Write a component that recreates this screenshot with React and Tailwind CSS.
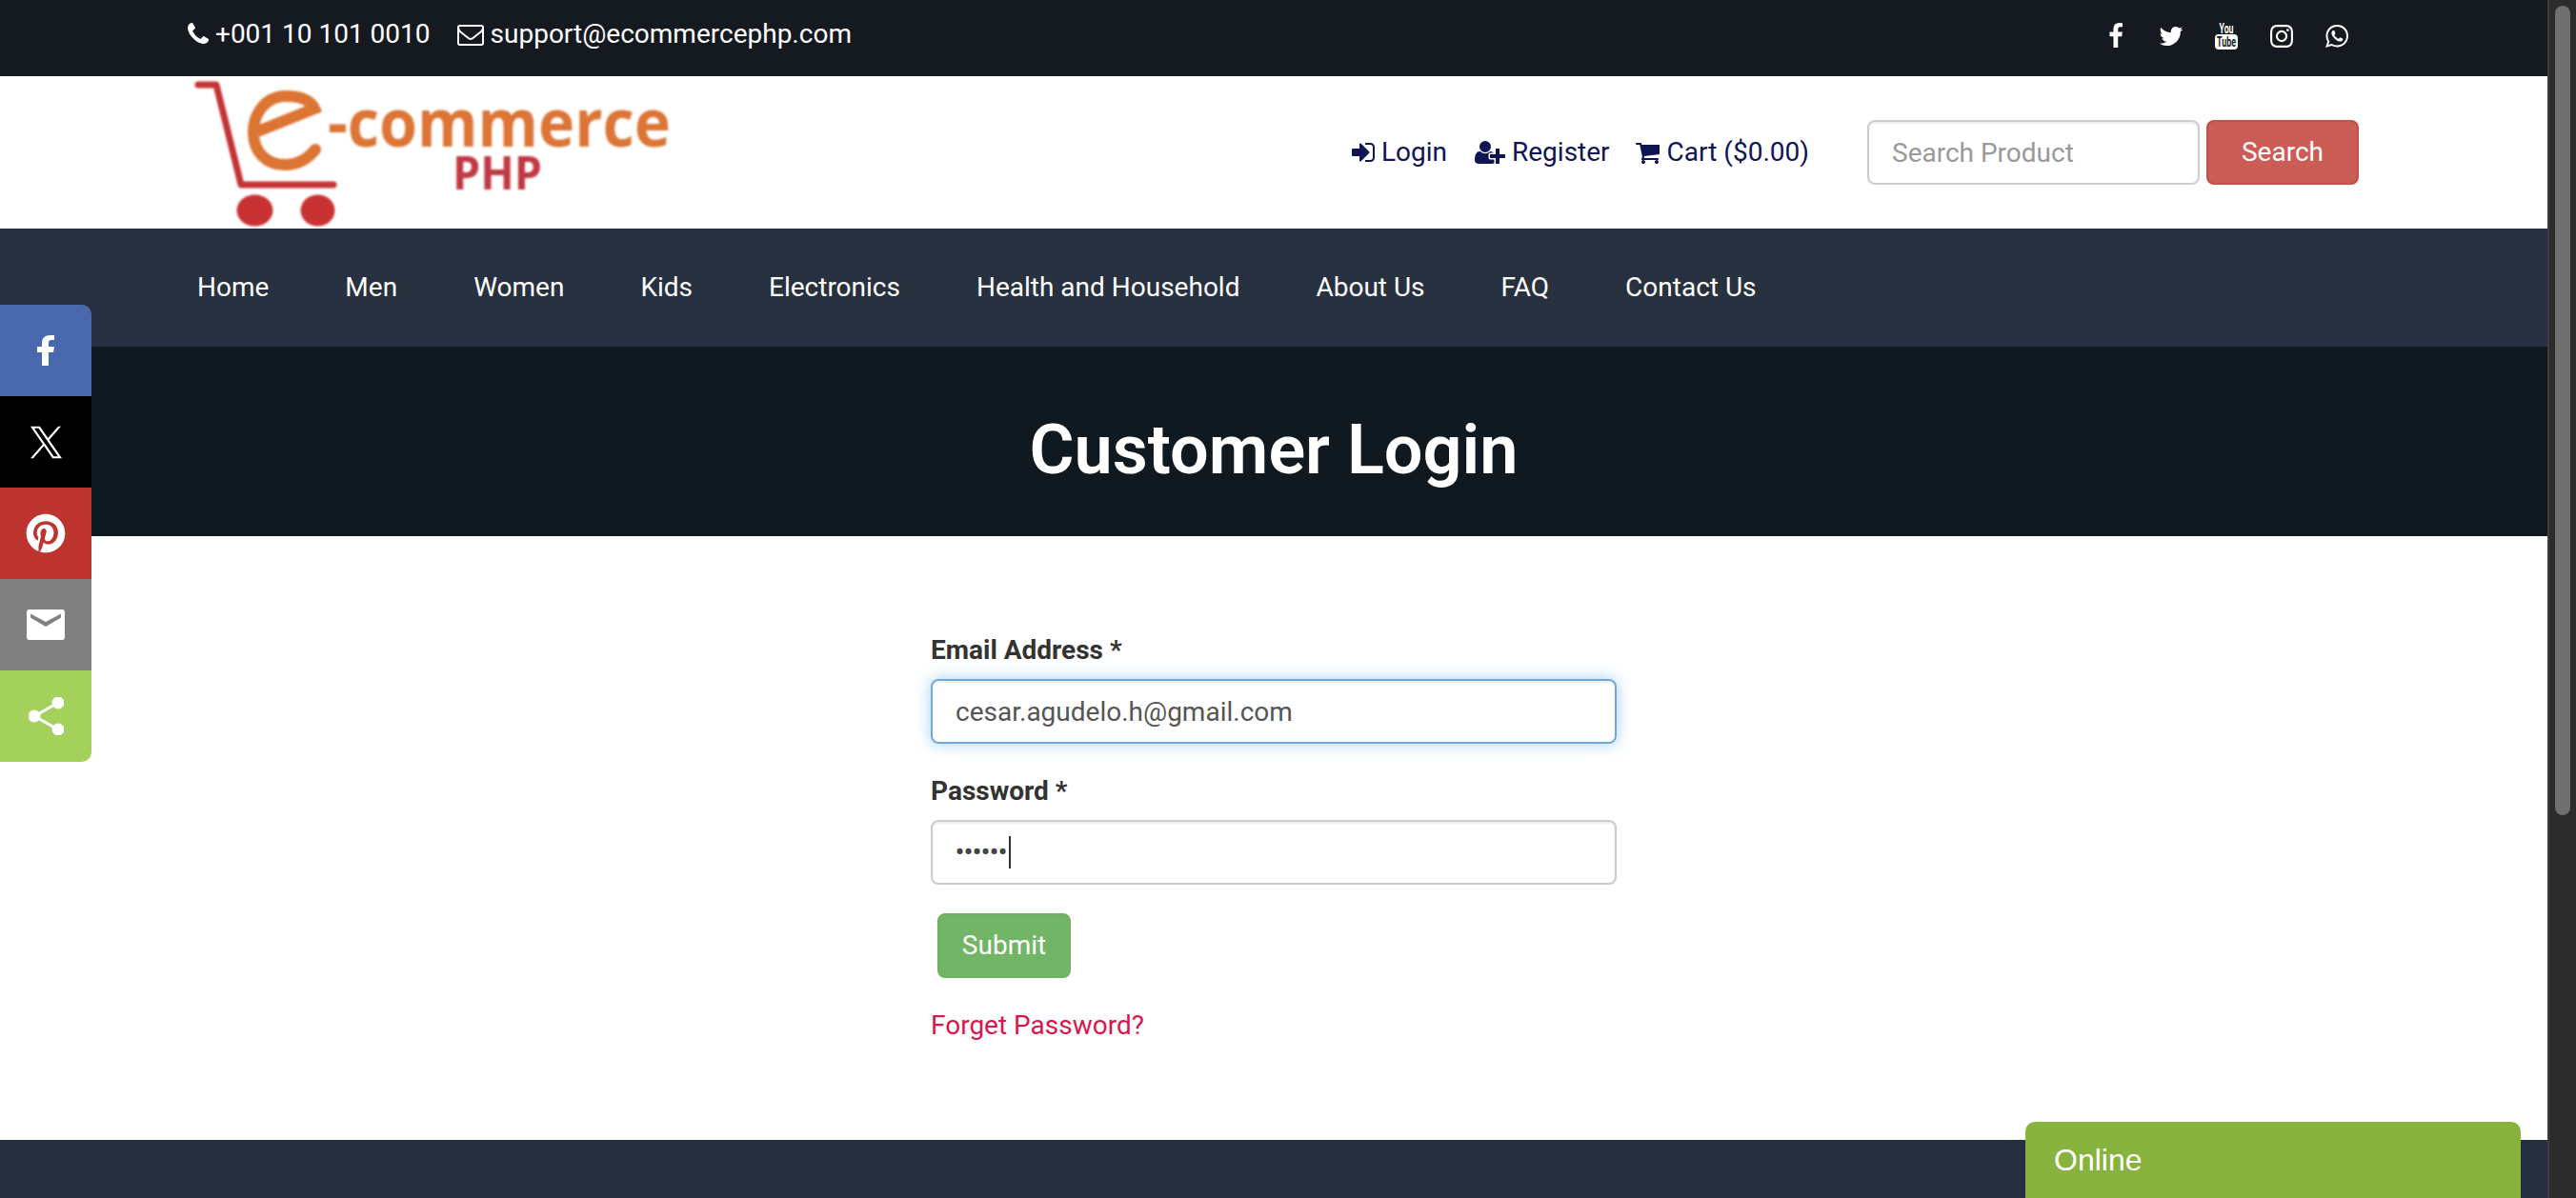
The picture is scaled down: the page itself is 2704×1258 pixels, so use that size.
import React from "react";
import { FaPinterest } from "react-icons/fa";

const P = {
  phone: "M1600 1240q0 27-10 70.500t-21 68.500q-21 50-122 106-94 51-186 51-27 0-53-3.500t-57.500-12.500-47-14.500-55.500-20.500-49-18q-98-35-175-83-127-79-264-216t-216-264q-48-77-83-175-3-9-18-49t-20.500-55.500-14.500-47-12.500-57.500-3.500-53q0-92 51-186 56-101 106-122 25-11 68.500-21t70.500-10q14 0 21 3 18 6 53 76 11 19 30 54t35 63.500 31 53.500q3 4 17.500 25t21.500 35.500 7 28.500q0 20-28.500 50t-62 55-62 53-28.500 46q0 9 5 22.500t8.500 20.500 14 24 11.500 19q76 137 174 235t235 174q2 1 19 11.500t24 14 20.500 8.500 22.500 5q18 0 46-28.500t53-62 55-62 50-28.500q14 0 28.500 7t35.500 21.500 25 17.500q25 15 53.500 31t63.500 35 54 30q70 35 76 53 3 7 3 21z",
  envelope: "M1664 1504v-768q-32 36-69 66-268 206-426 338-51 43-83 67t-86.500 48.500-102.500 24.500h-2q-48 0-102.500-24.500t-86.500-48.500-83-67q-158-132-426-338-37-30-69-66v768q0 13 9.500 22.500t22.500 9.500h1472q13 0 22.500-9.500t9.500-22.500zm0-1051v-24.500l-.5-13-3-12.500-5.500-9-9-7.500-14-2.500h-1472q-13 0-22.500 9.500t-9.500 22.500q0 168 147 284 193 152 401 317 6 5 35 29.500t46 37.500 44.500 31.500 50.500 27.500 43 9h2q20 0 43-9t50.500-27.500 44.500-31.500 46-37.500 35-29.500q208-165 401-317 54-43 100.500-115.500t46.500-131.500zm128-37v1088q0 66-47 113t-113 47h-1472q-66 0-113-47t-47-113v-1088q0-66 47-113t113-47h1472q66 0 113 47t47 113z",
  signIn: "M1184 896q0 26-19 45l-544 544q-19 19-45 19t-45-19-19-45v-288h-448q-26 0-45-19t-19-45v-384q0-26 19-45t45-19h448v-288q0-26 19-45t45-19 45 19l544 544q19 19 19 45zm352-352v704q0 119-84.500 203.500t-203.500 84.500h-320q-13 0-22.500-9.500t-9.500-22.500q0-4-1-20t-.5-26.500 3-23.500 10-19.500 20.500-6.500h320q66 0 113-47t47-113v-704q0-66-47-113t-113-47h-312l-11.500-1-11.500-3-8-5.500-7-9-2-13.500q0-4-1-20t-.5-26.500 3-23.500 10-19.500 20.500-6.500h320q119 0 203.500 84.500t84.500 203.500z",
  userPlus: "M704 896q-159 0-271.500-112.500t-112.500-271.500 112.500-271.500 271.500-112.500 271.500 112.500 112.500 271.500-112.500 271.500-271.500 112.500zm960 128h352q13 0 22.500 9.500t9.500 22.500v192q0 13-9.500 22.500t-22.500 9.500h-352v352q0 13-9.500 22.500t-22.500 9.500h-192q-13 0-22.500-9.500t-9.500-22.500v-352h-352q-13 0-22.500-9.500t-9.500-22.500v-192q0-13 9.500-22.500t22.500-9.500h352v-352q0-13 9.500-22.500t22.500-9.500h192q13 0 22.500 9.500t9.500 22.500v352zm-736 224q0 52 38 90t90 38h256v238q-68 50-171 50h-874q-121 0-194-69t-73-190q0-53 3.500-103.500t14-109 26.500-108.500 43-97.500 62-81 85.500-53.500 111.500-20q19 0 39 17 79 61 154.500 91.500t164.500 30.500 164.500-30.500 154.500-91.500q20-17 39-17 132 0 217 96h-223q-52 0-90 38t-38 90v192z",
  cart: "M704 1536q0 52-38 90t-90 38-90-38-38-90 38-90 90-38 90 38 38 90zm896 0q0 52-38 90t-90 38-90-38-38-90 38-90 90-38 90 38 38 90zm128-1088v512q0 24-16.500 42.500t-40.500 21.500l-1044 122q13 60 13 70 0 16-24 64h920q26 0 45 19t19 45-19 45-45 19h-1024q-26 0-45-19t-19-45q0-11 8-31.500t16-36 21.500-40 15.500-29.500l-177-823h-204q-26 0-45-19t-19-45 19-45 45-19h256q16 0 28.500 6.500t19.500 15.500 13 24.500 8 26 5.500 29.500 4.500 26h1201q26 0 45 19t19 45z",
  fb: "M1343 12v264h-157q-86 0-116 36t-30 108v189h293l-39 296h-254v759h-306v-759h-255v-296h255v-218q0-186 104-288.500t277-102.500q147 0 228 12z",
  tw: "M1684 408q-67 98-162 167 1 14 1 42 0 130-38 259.500t-115.500 248.500-184.500 210.500-258 146-323 54.500q-271 0-496-145 35 4 78 4 225 0 401-138-105-2-188-64.500t-114-159.500q33 5 61 5 43 0 85-11-112-23-185.500-111.500t-73.500-205.500v-4q68 38 146 41-66-44-105-115t-39-154q0-88 44-163 121 149 294.500 238.500t371.500 99.500q-8-38-8-74 0-134 94.500-228.500t228.500-94.500q140 0 236 102 109-21 205-78-37 115-142 181 93-10 186-50z",
  ig: "M1152 896q0-106-75-181t-181-75-181 75-75 181 75 181 181 75 181-75 75-181zm138 0q0 164-115 279t-279 115-279-115-115-279 115-279 279-115 279 115 115 279zm108-410q0 38-27 65t-65 27-65-27-27-65 27-65 65-27 65 27 27 65zm-502-220q-7 0-76.500-.5t-105.500 0-96.500 3-103 10-71.500 18.500q-50 20-88 58t-58 88q-11 29-18.500 71.500t-10 103-3 96.500 0 105.500.5 76.500-.5 76.500 0 105.500 3 96.500 10 103 18.500 71.500q20 50 58 88t88 58q29 11 71.500 18.500t103 10 96.500 3 105.500 0 76.500-.5 76.500.5 105.500 0 96.500-3 103-10 71.500-18.500q50-20 88-58t58-88q11-29 18.500-71.500t10-103 3-96.500 0-105.500-.5-76.500.5-76.500 0-105.500-3-96.500-10-103-18.500-71.500q-20-50-58-88t-88-58q-29-11-71.500-18.500t-103-10-96.500-3-105.500 0-76.500.5zm768 630q0 229-5 317-10 208-124 322t-322 124q-88 5-317 5t-317-5q-208-10-322-124t-124-322q-5-88-5-317t5-317q10-208 124-322t322-124q88-5 317-5t317 5q208 10 322 124t124 322q5 88 5 317z",
  wa: "M1113 974q13 0 97.500 44t89.500 53q2 5 2 15 0 33-17 76-16 39-71 65.500t-102 26.500q-57 0-190-62-98-45-170-118t-148-185q-72-107-71-194v-8q3-91 74-158 24-22 52-22 6 0 18 1.500t19 1.500q19 0 26.500 6.500t15.500 27.500q8 20 33 88t25 75q0 21-34.500 57.500t-34.500 46.500q0 7 5 15 34 73 102 137 56 53 151 101 12 7 22 7 15 0 54-48.500t52-48.500zm-203 530q127 0 243.500-50t200.500-134 134-200.500 50-243.500-50-243.500-134-200.500-200.500-134-243.500-50-243.500 50-200.500 134-134 200.500-50 243.500q0 203 120 368l-79 233 242-77q158 104 345 104zm0-1382q153 0 292.500 60t240.500 161 161 240.500 60 292.500-60 292.500-161 240.500-240.500 161-292.500 60q-195 0-365-94l-417 134 136-405q-108-178-108-389 0-153 60-292.500t161-240.500 240.500-161 292.500-60z",
};

function FA({ d, x = 0, w = 1792, className = "" }) {
  return (
    <svg width={(w / 1792) * 28} height={28} viewBox={`${x} 0 ${w} 1792`} fill="currentColor" className={`shrink-0 ${className}`}>
      <path d={d} />
    </svg>
  );
}

function Youtube() {
  return (
    <svg width="24" height="28" viewBox="0 0 24 28" fill="#fff" className="overflow-visible">
      <text x="12" y="10.500" textAnchor="middle" fontSize="14" fontWeight="700" fontFamily="Roboto" textLength="15" lengthAdjust="spacingAndGlyphs">You</text>
      <rect x="0" y="12" width="24" height="16" rx="4" />
      <text x="12" y="25" textAnchor="middle" fontSize="15" fontWeight="700" fontFamily="Roboto" fill="#151a21" textLength="20" lengthAdjust="spacingAndGlyphs">Tube</text>
    </svg>
  );
}

function Logo() {
  return (
    <svg width="520" height="158" viewBox="0 0 520 158" className="block blur-[0.8px] overflow-visible">
      <path d="M11 8 H30 L56 113 H153" fill="none" stroke="#c43434" strokeWidth="7" strokeLinejoin="round" strokeLinecap="round" />
      <ellipse cx="70.500" cy="140" rx="19" ry="16.500" fill="#c93232" />
      <ellipse cx="136.500" cy="140" rx="18" ry="16.500" fill="#c93232" />
      <path d="M76 56 L133 33 C128 22 115 20 103 20 C82 20 69 38 69 58 C69 78 82 92 102 92 C116 92 126 86 134 76" fill="none" stroke="#dc7433" strokeWidth="12" strokeLinecap="round" />
      <text x="147" y="73" fontFamily="Open Sans" fontWeight="700" fontSize="70" fill="#dc7536" textLength="360" lengthAdjust="spacingAndGlyphs">-commerce</text>
      <text x="278" y="118" fontFamily="Open Sans" fontWeight="700" fontSize="49" fill="#bf3a43" textLength="94" lengthAdjust="spacingAndGlyphs">PHP</text>
    </svg>
  );
}

function FbBig() {
  return (
    <svg width="18" height="32" viewBox="0 0 18 32" fill="#fff">
      <path d="M12 32V18h5l1-6h-6V8c0-2 1-3 3-3h3V0h-4C8 0 5 3 5 8v4H0v6h5v14z" />
    </svg>
  );
}

function XLogo() {
  return (
    <svg width="33" height="35" viewBox="0 0 1200 1227" fill="#fff">
      <path d="M714.163 519.284L1160.89 0H1055.03L667.137 450.887L357.328 0H0L468.492 681.821L0 1226.37H105.866L515.491 750.218L842.672 1226.37H1200L714.137 519.284H714.163ZM569.165 687.828L521.697 619.934L144.011 79.6944H306.615L611.412 515.685L658.88 583.579L1055.08 1150.3H892.476L569.165 687.854V687.828Z" />
    </svg>
  );
}

function MailBig() {
  return (
    <svg width="40" height="32" viewBox="0 0 40 32">
      <rect width="40" height="32" rx="3" fill="#fff" />
      <polygon points="4,4.500 20,13 36,4.500 36,8.500 20,18 4,8.500" fill="#808080" />
    </svg>
  );
}

function ShareBig() {
  return (
    <svg width="37" height="40" viewBox="0 0 37 40" fill="#fff" stroke="#fff" strokeWidth="3">
      <path d="M31 6 L6 20 L31 34" fill="none" />
      <circle cx="6" cy="20" r="5" />
      <circle cx="31" cy="6" r="5" />
      <circle cx="31" cy="34" r="5" />
    </svg>
  );
}

const nav = ["Home", "Men", "Women", "Kids", "Electronics", "Health and Household", "About Us", "FAQ", "Contact Us"];

const share = [
  { bg: "bg-[#4968ad]", icon: <FbBig />, cls: "rounded-tr-[10px]" },
  { bg: "bg-black", icon: <XLogo />, cls: "" },
  { bg: "bg-[#bd3431]", icon: <FaPinterest size={42} color="#fff" />, cls: "" },
  { bg: "bg-[#808080]", icon: <MailBig />, cls: "" },
  { bg: "bg-[#a4d15c]", icon: <ShareBig />, cls: "rounded-br-[10px]" },
];

export default function App() {
  return (
    <div className="relative h-[1258px] w-[2704px] overflow-hidden flex font-['Roboto',sans-serif] text-[28px]">
      <div className="w-[2674px] shrink-0 flex flex-col">
        <div className="h-[80px] bg-[#151a21] text-white px-[197px] flex items-start justify-between pt-[18px] leading-[36px]">
          <div className="flex items-center">
            <FA d={P.phone} x={192} w={1408} className="mr-[7px]" />
            <span>+001 10 101 0010</span>
            <FA d={P.envelope} className="ml-[28px] mr-[7px]" />
            <span>support@ecommercephp.com</span>
          </div>
          <div className="flex items-center justify-center gap-[34px] pr-[12px] mt-[2px] h-[36px]">
            <span className="w-[24px] flex justify-center"><FA d={P.fb} /></span>
            <span className="w-[24px] flex justify-center"><FA d={P.tw} /></span>
            <span className="w-[24px] flex justify-center"><Youtube /></span>
            <span className="w-[24px] flex justify-center"><FA d={P.ig} x={128} w={1536} /></span>
            <span className="w-[24px] flex justify-center"><FA d={P.wa} w={1536} x={128} /></span>
          </div>
        </div>

        <div className="h-[160px] bg-white pl-[197px] pr-[198px] flex items-center justify-between text-[#0f1554]">
          <Logo />
          <div className="flex items-center">
            <a className="flex items-center"><FA d={P.signIn} w={1536} className="mr-[7px]" />Login</a>
            <a className="flex items-center ml-[29px]"><FA d={P.userPlus} w={2048} className="mr-[7px]" />Register</a>
            <a className="flex items-center ml-[26px]"><FA d={P.cart} w={1664} className="mr-[8px]" />Cart ($0.00)</a>
            <input
              readOnly
              placeholder="Search Product"
              className="ml-[61px] w-[349px] h-[68px] border-2 border-[#ccc] rounded-[8px] px-[24px] bg-white outline-none placeholder:text-[#999] text-[#555] shadow-[inset_0_2px_2px_rgba(0,0,0,0.075)]"
            />
            <button className="ml-[7px] w-[160px] h-[68px] bg-[#cb5c56] border-2 border-[#c24f49] rounded-[8px] text-white">Search</button>
          </div>
        </div>

        <div className="h-[124px] bg-[#28313f] px-[207px] flex items-center gap-[80px] text-white">
          {nav.map((n) => <a key={n}>{n}</a>)}
        </div>

        <div className="h-[199px] bg-[#111920] flex items-center justify-center pt-[18px]">
          <h1 className="text-white font-semibold text-[72px] leading-none">Customer Login</h1>
        </div>

        <div className="h-[634px] bg-white flex justify-center pt-[100px] text-[#333]">
          <div className="w-[720px] flex flex-col">
            <label className="font-bold leading-[40px] mb-[10px]">Email Address *</label>
            <input
              readOnly
              value="cesar.agudelo.h@gmail.com"
              className="h-[68px] border-2 border-[#6fa8e0] rounded-[8px] px-[24px] text-[#555] outline-none shadow-[inset_0_2px_2px_rgba(0,0,0,0.075),0_0_16px_rgba(102,175,233,0.6)]"
            />
            <label className="font-bold leading-[40px] mt-[30px] mb-[10px]">Password *</label>
            <div className="h-[68px] border-2 border-[#c8ccd1] rounded-[8px] pl-[24px] flex items-center shadow-[inset_0_2px_2px_rgba(0,0,0,0.075)] text-[#444]">
              {[0, 1, 2, 3, 4, 5].map((i) => (
                <span key={i} className="w-[9px] flex justify-center text-[30px] leading-none">•</span>
              ))}
              <span className="w-[2px] h-[34px] bg-[#333] ml-[2px]"></span>
            </div>
            <button className="mt-[30px] ml-[7px] w-[140px] h-[68px] bg-[#73b566] border-2 border-[#6fb162] rounded-[8px] text-white">Submit</button>
            <a className="mt-[30px] leading-[40px] text-[#d9174c]">Forget Password?</a>
          </div>
        </div>

        <div className="flex-1 bg-[#252f40]"></div>
      </div>

      <div className="w-[30px] bg-[#2c2c2c] border-l-2 border-[#3c3c3c] pl-[6px] pt-[6px]">
        <div className="w-[16px] h-[850px] rounded-full bg-[#6f6f6f]"></div>
      </div>

      <div className="absolute left-0 top-[320px] w-[96px] flex flex-col">
        {share.map((s, i) => (
          <div key={i} className={`h-[96px] flex items-center justify-center ${s.bg} ${s.cls}`}>{s.icon}</div>
        ))}
      </div>

      <div className="absolute left-[2126px] top-[1178px] w-[520px] h-[80px] bg-[#87b33e] rounded-t-[10px] px-[30px] pt-[18px] text-white font-['Liberation_Sans',sans-serif] text-[32px] leading-[44px]">Online</div>
    </div>
  );
}
